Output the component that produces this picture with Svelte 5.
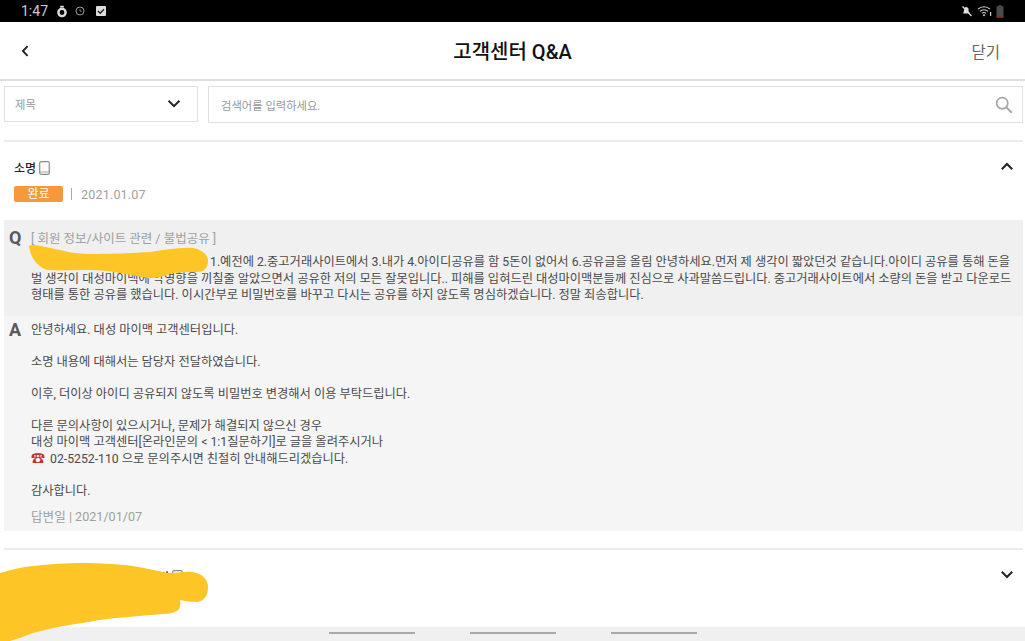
<script>
	let { } = $props();

	const answerLines = [
		'안녕하세요. 대성 마이맥 고객센터입니다.',
		'',
		'소명 내용에 대해서는 담당자 전달하였습니다.',
		'',
		'이후, 더이상 아이디 공유되지 않도록 비밀번호 변경해서 이용 부탁드립니다.',
		'',
		'다른 문의사항이 있으시거나, 문제가 해결되지 않으신 경우',
		'대성 마이맥 고객센터[온라인문의 < 1:1질문하기]로 글을 올려주시거나',
		'☎ 02-5252-110 으로 문의주시면 친절히 안내해드리겠습니다.',
		'',
		'감사합니다.'
	];
</script>

<div class="page">
	<div class="status">
		<div class="status-left">
			<span class="time">1:47</span>
			<svg width="12" height="13" viewBox="0 0 12 13"><circle cx="6" cy="7.5" r="3.6" fill="none" stroke="#ddd" stroke-width="2.4" /><rect x="4.2" y="0.8" width="3.6" height="1.8" fill="#ddd" /></svg>
			<svg width="12" height="12" viewBox="0 0 12 12"><circle cx="6" cy="6" r="4" fill="none" stroke="#999" stroke-width="1" /><path d="M6 4v2.2h1.6" fill="none" stroke="#999" stroke-width="0.8" /></svg>
			<svg class="check" width="12" height="12" viewBox="0 0 12 12"><rect x="1" y="1" width="10" height="10" rx="1" fill="#ddd" /><path d="M3 6l2.2 2.2L9 4.2" fill="none" stroke="#222" stroke-width="1.4" /></svg>
		</div>
		<div class="status-right">
			<svg width="12" height="12" viewBox="0 0 12 12"><path d="M2 8.5h7L7.6 6.5V4.2a2.4 2.4 0 0 0-4 -1.6L2.8 6.5z" fill="#ddd" /><path d="M1.5 1.5l9 9.5" stroke="#ddd" stroke-width="1.3" /></svg>
			<svg width="15" height="12" viewBox="0 0 15 12"><path d="M1 4.2a8.5 8.5 0 0 1 12 0M3 6.4a5.6 5.6 0 0 1 8 0M5 8.4a2.8 2.8 0 0 1 4 0" fill="none" stroke="#ccc" stroke-width="1.1" /><circle cx="7" cy="10.3" r="1" fill="#ccc" /><rect x="13" y="7" width="1.2" height="4" fill="#ccc" /></svg>
			<svg width="8" height="13" viewBox="0 0 8 13"><rect x="2.6" y="0" width="2.8" height="1.4" fill="#4a4a4a" /><rect x="0.5" y="1.2" width="7" height="11.3" fill="#4a4a4a" /><rect x="0.5" y="10.8" width="7" height="1.7" fill="#7a3a2a" /></svg>
		</div>
	</div>

	<header class="topbar">
		<svg class="back" width="10" height="14" viewBox="0 0 10 14"><path d="M7.6 2.2L2.9 7l4.7 4.8" fill="none" stroke="#222" stroke-width="1.9" /></svg>
		<h1>고객센터 Q&amp;A</h1>
		<span class="close">닫기</span>
	</header>

	<div class="filters">
		<div class="select">
			<span>제목</span>
			<svg width="14" height="10" viewBox="0 0 14 10"><path d="M1.6 1.8L7 7.2l5.4-5.4" fill="none" stroke="#222" stroke-width="2" /></svg>
		</div>
		<div class="search">
			<span>검색어를 입력하세요.</span>
			<svg width="18" height="18" viewBox="0 0 18 18"><circle cx="7.2" cy="7.2" r="5.6" fill="none" stroke="#a6a6a6" stroke-width="1.7" /><path d="M11.4 11.4l5.4 5.4" stroke="#a6a6a6" stroke-width="2" /></svg>
		</div>
	</div>

	<section class="item open">
		<div class="item-head">
			<div class="name">
				<strong>소명</strong>
				<svg width="11" height="14" viewBox="0 0 11 14"><rect x="0.7" y="0.7" width="9.6" height="12.6" rx="1.6" fill="none" stroke="#8a8a8a" stroke-width="1.2" /><path d="M1 11h9" stroke="#8a8a8a" stroke-width="0.8" /></svg>
			</div>
			<svg class="chev" width="14" height="9" viewBox="0 0 14 9"><path d="M1.8 7.2L7 2l5.2 5.2" fill="none" stroke="#222" stroke-width="2" /></svg>
		</div>
		<div class="meta">
			<span class="badge">완료</span>
			<span class="sep"></span>
			<span class="date">2021.01.07</span>
		</div>

		<div class="qa question">
			<span class="letter">Q</span>
			<div class="qa-body">
				<p class="category">[ 회원 정보/사이트 관련 / 불법공유 ]</p>
				<p class="first">1.예전에 2.중고거래사이트에서 3.내가 4.아이디공유를 함 5돈이 없어서 6.공유글을 올림 안녕하세요.먼저 제 생각이 짧았던것 같습니다.아이디 공유를 통해 돈을</p>
				<p>벌 생각이 대성마이맥에 악영향을 끼칠줄 알았으면서 공유한 저의 모든 잘못입니다.. 피해를 입혀드린 대성마이맥분들께 진심으로 사과말씀드립니다. 중고거래사이트에서 소량의 돈을 받고 다운로드</p>
				<p>형태를 통한 공유를 했습니다. 이시간부로 비밀번호를 바꾸고 다시는 공유를 하지 않도록 명심하겠습니다. 정말 죄송합니다.</p>
			</div>
		</div>

		<div class="qa answer">
			<span class="letter">A</span>
			<div class="qa-body">
				{#each answerLines as line}
					<p class="line">
						{#if line.startsWith('☎')}<span class="phone">☎</span>{line.slice(2)}{:else}{line}{/if}
					</p>
				{/each}
				<p class="answered">답변일 | 2021/01/07</p>
			</div>
		</div>
	</section>

	<section class="item closed">
		<div class="name">
			<strong>명</strong>
			<svg width="11" height="14" viewBox="0 0 11 14"><rect x="0.7" y="0.7" width="9.6" height="12.6" rx="1.6" fill="none" stroke="#8a8a8a" stroke-width="1.2" /></svg>
		</div>
		<svg class="chev" width="14" height="9" viewBox="0 0 14 9"><path d="M1.8 1.8L7 7l5.2-5.2" fill="none" stroke="#222" stroke-width="2" /></svg>
	</section>

	<nav class="navbar">
		<span></span><span></span><span></span>
	</nav>

	<!-- censor scribbles drawn over the screenshot -->
	<svg class="scribble" width="1025" height="641" viewBox="0 0 1025 641">
		<path d="M29 246C32 243 45 247 60 250C72 253 82 254 93 254C112 254 132 253 150 252C165 250 180 247 193 248C203 250 208 255 208 261C208 269 203 272 197 272C188 272 180 272 173 273C165 276 155 279 147 278C130 275 110 270 90 270C75 270 60 271 47 270C36 266 30 256 29 246Z" fill="#fec526" />
		<path d="M0 573C10 570 22 567 33 566C50 564 66 563 83 563C100 563 118 564 133 566C146 568 157 571 167 573C176 573 185 571 193 572C203 574 208 580 208 587C208 596 204 601 197 602C191 602 185 601 180 600C181 605 180 608 178 610C174 613 168 614 163 614C142 616 120 617 100 620C76 624 54 627 33 633C25 636 17 639 10 641H0Z" fill="#fec526" />
	</svg>
</div>

<style>
	:global(body) {
		margin: 0;
		background: #fff;
	}
	.page {
		position: relative;
		width: 1025px;
		height: 641px;
		overflow: hidden;
		display: flex;
		flex-direction: column;
		font-family: Roboto, 'Noto Sans CJK KR', sans-serif;
		color: #333;
	}
	p {
		margin: 0;
	}
	.status {
		height: 22px;
		flex: none;
		background: #000;
		display: flex;
		align-items: center;
		justify-content: space-between;
		padding: 0 21px 0 21px;
	}
	.status-left,
	.status-right {
		display: flex;
		align-items: center;
		gap: 6px;
	}
	.status-right {
		gap: 4px;
	}
	.status-left .check {
		margin-left: 3px;
	}
	.time {
		color: #ccc;
		font-size: 14px;
		margin-right: 2px;
	}
	.topbar {
		height: 59px;
		flex: none;
		box-sizing: border-box;
		border-bottom: 2px solid #dedede;
		display: grid;
		grid-template-columns: 1fr auto 1fr;
		align-items: center;
		padding: 0 20px;
	}
	.topbar h1 {
		margin: 0;
		font-size: 20px;
		font-weight: 500;
		color: #111;
	}
	.close {
		justify-self: end;
		font-size: 15.5px;
		color: #666;
		margin-right: 5px;
	}
	.filters {
		display: flex;
		gap: 10px;
		padding: 5px 2px 0 4px;
		flex: none;
	}
	.select,
	.search {
		height: 36px;
		box-sizing: border-box;
		border: 1px solid #e0e0e0;
		display: flex;
		align-items: center;
		justify-content: space-between;
		font-size: 11.3px;
		color: #999;
	}
	.select {
		width: 194px;
		padding: 0 16px 0 10px;
	}
	.search {
		flex: 1;
		height: 37px;
		padding: 0 9px 0 12px;
	}
	.item {
		margin: 17px 2px 0 4px;
		border-top: 2px solid #ececec;
		flex: none;
	}
	.item-head {
		display: flex;
		justify-content: space-between;
		align-items: center;
		padding: 17px 9px 0 10px;
	}
	.item-head .chev {
		margin-top: -3px;
	}
	.name {
		display: flex;
		align-items: center;
		gap: 3px;
		font-size: 12px;
		color: #222;
	}
	.name strong {
		font-weight: 500;
	}
	.meta {
		display: flex;
		align-items: center;
		padding: 10px 0 0 10px;
	}
	.badge {
		width: 49px;
		height: 16px;
		border-radius: 2px;
		background: #f7983a;
		color: #fff;
		font-size: 12px;
		line-height: 16px;
		text-align: center;
	}
	.sep {
		width: 1px;
		height: 12px;
		background: #aaa;
		margin: 0 9px 0 8px;
	}
	.date {
		font-size: 12.5px;
		color: #a0a0a0;
		letter-spacing: 0.2px;
	}
	.qa {
		display: flex;
		padding-left: 5px;
		font-size: 12.25px;
		color: #4a4a4a;
		line-height: 16px;
	}
	.letter {
		width: 22px;
		flex: none;
		font-size: 18px;
		font-weight: 700;
		color: #5a5a5a;
		line-height: 20px;
	}
	.question {
		margin-top: 18px;
		height: 96px;
		box-sizing: border-box;
		padding-top: 10px;
		background: #f0f0f0;
	}
	.question .letter {
		margin-top: -2px;
	}
	.question .qa-body p {
		line-height: 16.5px;
	}
	.question .qa-body p.category {
		color: #a0a0a0;
		font-size: 12.5px;
		line-height: 18px;
		margin-bottom: 6px;
	}
	.first {
		text-indent: 179px;
	}
	.answer {
		height: 215px;
		box-sizing: border-box;
		padding-top: 6px;
		background: #f5f5f5;
	}
	.answer .letter {
		margin-top: -2px;
	}
	.line {
		min-height: 16px;
		line-height: 16px;
	}
	.phone {
		color: #c4312a;
		font-size: 14px;
		margin-right: 5px;
	}
	.answered {
		color: #a0a0a0;
		font-size: 12.6px;
		margin-top: 10px;
	}
	.closed {
		margin-top: 17px;
		height: 78px;
		box-sizing: border-box;
		display: flex;
		align-items: flex-start;
		justify-content: space-between;
		padding: 18px 9px 0 154px;
	}
	.closed .chev {
		margin-top: 2px;
	}
	.navbar {
		position: absolute;
		left: 0;
		right: 0;
		bottom: 0;
		height: 14px;
		background: #f0f0f0;
		display: flex;
		justify-content: center;
		gap: 55px;
		padding-top: 5px;
		box-sizing: border-box;
	}
	.navbar span {
		width: 86px;
		height: 2px;
		background: #a9a9a9;
	}
	.scribble {
		position: absolute;
		left: 0;
		top: 0;
	}
</style>
